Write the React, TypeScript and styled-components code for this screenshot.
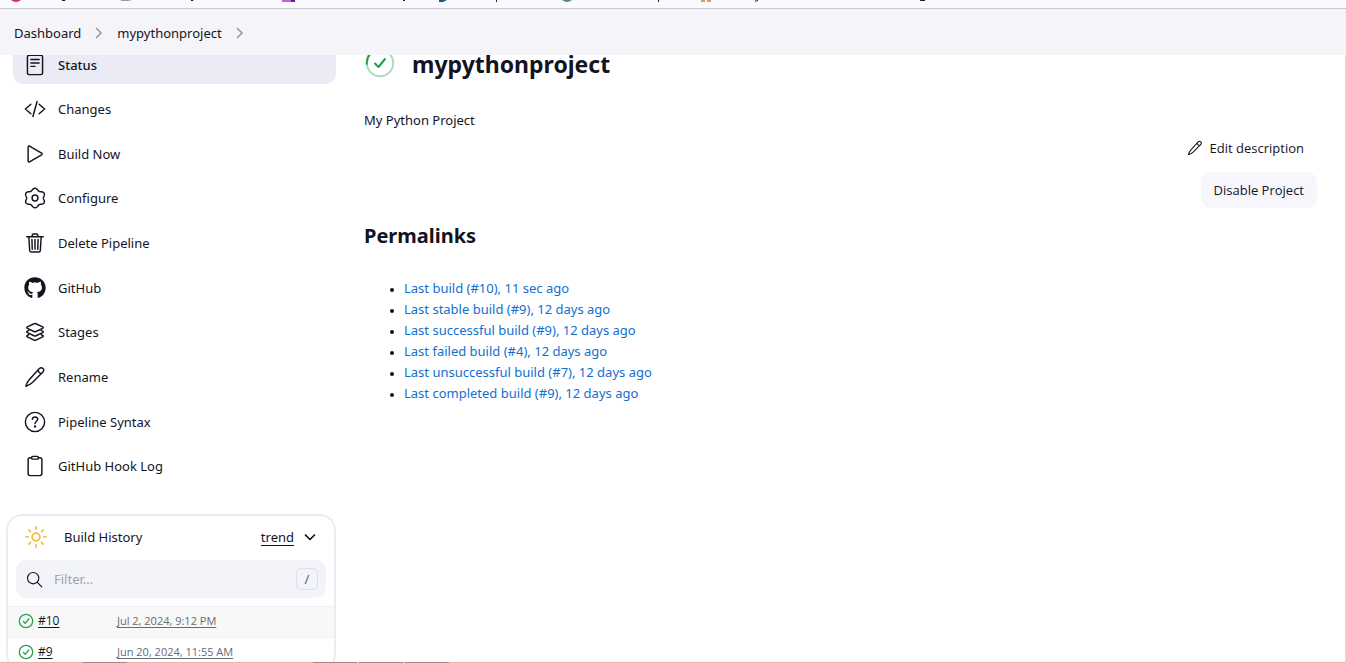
import React from "react";
import styled, { createGlobalStyle, css } from "styled-components";
import { FaGithub } from "react-icons/fa";

const GlobalStyle = createGlobalStyle`
  * { box-sizing: border-box; }
  body {
    margin: 0;
    background: #fff;
    color: #14141f;
    font-family: "Noto Sans", "Open Sans", sans-serif;
    font-size: 13px;
    line-height: 20px;
  }
  a { color: inherit; }
  button, input { font: inherit; color: inherit; }
`;

const Page = styled.div`
  display: flex;
  flex-direction: column;
  height: 100vh;
  overflow: hidden;
`;

const BookmarkStrip = styled.div`
  flex: none;
  height: 9px;
  background: #f9f9fe;
  border-bottom: 1px solid #c9c9d1;
  svg { display: block; }
`;

const Breadcrumbs = styled.nav`
  position: relative;
  z-index: 1;
  flex: none;
  display: flex;
  align-items: center;
  gap: 12px;
  height: 46px;
  padding: 2px 14px 0;
  background: #f4f4f9;
  a { text-decoration: none; }
  svg { color: #9a9aa5; }
`;

const Body = styled.div`
  flex: 1;
  min-height: 0;
  display: flex;
  align-items: flex-start;
  overflow: hidden;
  border-right: 1px solid #dcdce0;
`;

const SidePanel = styled.aside`
  flex: none;
  width: 336px;
  margin-top: -10px;
  padding-left: 6px;
`;

const Tasks = styled.nav`
  display: flex;
  flex-direction: column;
  justify-content: space-between;
  min-height: 441px;
  padding-left: 7px;
`;

const Task = styled.a<{ $active?: boolean }>`
  display: flex;
  align-items: center;
  gap: 12px;
  height: 39px;
  padding: 0 11px;
  border-radius: 10px;
  text-decoration: none;
  ${(p) => p.$active && css`
    background: #ebebf5;
    font-weight: 500;
  `}
`;

const HistoryCard = styled.section`
  margin-top: 28px;
  border: 2px solid #ebebf5;
  border-radius: 16px;
`;

const HistoryHead = styled.header`
  display: flex;
  align-items: center;
  height: 42px;
  padding: 0 16px;
`;

const HistoryTitle = styled.span`
  flex: 1;
  margin-left: 16px;
`;

const TrendLink = styled.a`
  display: flex;
  align-items: center;
  gap: 8px;
  text-underline-offset: 3px;
`;

const FilterBox = styled.label`
  display: flex;
  align-items: center;
  gap: 11px;
  height: 38px;
  margin: 2px 8px 8px;
  padding: 0 8px 0 10px;
  border-radius: 10px;
  background: #f3f3fa;
  input {
    flex: 1;
    min-width: 0;
    padding: 0;
    border: 0;
    outline: 0;
    background: none;
  }
  input::placeholder { color: #a3a3ae; opacity: 1; }
`;

const Key = styled.kbd`
  width: 22px;
  height: 22px;
  border: 1px solid #dfdfe9;
  border-radius: 5px;
  color: #5c5c68;
  font: inherit;
  text-align: center;
`;

const Builds = styled.table`
  width: 100%;
  border-collapse: collapse;
  font-size: 12px;
  font-family: "Open Sans", "Noto Sans", sans-serif;
  line-height: 18px;
  td {
    height: 31px;
    padding: 0 0 2px;
    border-top: 1px solid #f0f0f3;
  }
  tr:first-child { background: #f8f8f8; }
  a { text-underline-offset: 2px; }
`;

const BuildName = styled.td`
  width: 109px;
  div {
    display: flex;
    align-items: center;
    gap: 4px;
    padding-left: 10px;
  }
`;

const BuildDate = styled.td`
  color: #6a6a72;
  font-size: 11px;
`;

const MainPanel = styled.main`
  flex: 1;
  min-width: 0;
  margin-top: -9px;
  padding: 0 28px;
`;

const Title = styled.h1`
  display: flex;
  align-items: center;
  gap: 16px;
  margin: 0;
  font-size: 23px;
  line-height: 36px;
`;

const Description = styled.p`
  margin: 28px 0 0;
`;

const Actions = styled.div`
  display: flex;
  flex-direction: column;
  align-items: flex-end;
  gap: 6px;
`;

const Button = styled.button<{ $filled?: boolean }>`
  display: flex;
  align-items: center;
  gap: 7px;
  height: 36px;
  padding: 0 13px;
  border: 0;
  border-radius: 10px;
  background: ${(p) => (p.$filled ? "#f6f6fc" : "transparent")};
  font-family: "Open Sans", "Noto Sans", sans-serif;
`;

const Heading = styled.h2`
  margin: 12px 0 26px;
  font-size: 20px;
  line-height: 32px;
`;

const Permalinks = styled.ul`
  margin: 0;
  padding-left: 40px;
  line-height: 21px;
  li::marker { font-size: 10px; }
  a { color: #126fd0; text-decoration: none; }
`;

const StatusLine = styled.div`
  flex: none;
  height: 1px;
  background: #eeb0b0;
  svg { display: block; }
`;

const Glyph = ({ size = 22, children }: { size?: number; children: React.ReactNode }) => (
  <svg width={size} height={size} viewBox="0 0 512 512" fill="none" stroke="currentColor"
    strokeWidth="34" strokeLinecap="round" strokeLinejoin="round" aria-hidden="true">
    {children}
  </svg>
);

// Six-lobed outline of the settings cog
const cogOutline = Array.from({ length: 120 }, (_, i) => {
  const angle = (i / 120) * Math.PI * 2;
  const radius = 203 - 23 * Math.cos(6 * angle);
  const x = 256 + radius * 1.08 * Math.cos(angle);
  const y = 256 + radius * Math.sin(angle);
  return `${Math.round(x)},${Math.round(y)}`;
}).join(" ");

const icons = {
  status: (
    <Glyph>
      <rect x="80" y="32" width="352" height="448" rx="36" />
      <path d="M160 128h192M160 208h192M160 288h96" />
    </Glyph>
  ),
  changes: <Glyph><path d="M160 368L32 256l128-112M352 368l128-112-128-112M304 80l-96 352" /></Glyph>,
  build: (
    <Glyph>
      <path d="M96 91v330c0 18 17 29 32 21l282-168c14-9 14-27 0-36L128 70c-15-8-32 3-32 21z" />
    </Glyph>
  ),
  configure: (
    <Glyph>
      <circle cx="256" cy="256" r="68" />
      <polygon points={cogOutline} />
    </Glyph>
  ),
  trash: (
    <Glyph>
      <path d="M112 112l20 320c1 18 14 32 32 32h184c18 0 31-14 32-32l20-320M64 112h384M192 112V72c0-13 11-24 24-24h80c13 0 24 11 24 24v40M256 176v224M184 176l8 224M328 176l-8 224" />
    </Glyph>
  ),
  github: <FaGithub size={22} aria-hidden="true" />,
  stages: (
    <Glyph>
      <path d="M434 137L279 64c-14-7-32-7-46 0L78 137c-18 9-18 25 0 34l155 73c14 7 32 7 46 0l155-73c18-9 18-25 0-34z" />
      <path d="M112 219l-34 18c-18 9-18 25 0 34l155 73c14 7 32 7 46 0l155-73c18-9 18-25 0-34l-34-18" />
      <path d="M112 319l-34 18c-18 9-18 25 0 34l155 73c14 7 32 7 46 0l155-73c18-9 18-25 0-34l-34-18" />
    </Glyph>
  ),
  question: (
    <Glyph>
      <circle cx="256" cy="256" r="224" />
      <path d="M194 192c2-36 30-54 62-54 34 0 63 21 63 55 0 44-62 50-62 98" />
      <circle cx="257" cy="360" r="11" fill="currentColor" />
    </Glyph>
  ),
  clipboard: (
    <Glyph>
      <path d="M336 64h32c26 0 48 22 48 48v320c0 26-22 48-48 48H144c-26 0-48-22-48-48V112c0-26 22-48 48-48h32" />
      <rect x="176" y="32" width="160" height="64" rx="26" />
    </Glyph>
  ),
};

const Pencil = ({ size }: { size?: number }) => (
  <Glyph size={size}>
    <path d="M352 66c28-26 66-31 89-8 24 24 20 62-7 90L196 386c-44 42-94 66-152 84 14-60 40-110 82-154zM330 90c0 52 36 90 84 82" />
  </Glyph>
);

const Chevron = () => (
  <svg width="12" height="14" viewBox="0 0 12 14" fill="none" stroke="currentColor" strokeWidth="1.6" aria-hidden="true">
    <path d="M3 2l5 5-5 5" />
  </svg>
);

const Passed = () => (
  <svg width="16" height="16" viewBox="0 0 16 16" fill="none" stroke="#2ba04f" strokeWidth="1.3"
    strokeLinecap="round" strokeLinejoin="round" role="img" aria-label="Success">
    <circle cx="8" cy="8" r="6.7" />
    <path d="M5.3 8.4l1.9 1.9 3.600-4.300" />
  </svg>
);

const RunningPassed = () => (
  <svg width="32" height="32" viewBox="0 0 32 32" fill="none" strokeLinecap="round" strokeLinejoin="round"
    role="img" aria-label="In progress">
    <circle cx="16" cy="15" r="13.2" stroke="#a9dcb9" strokeWidth="2" />
    <path d="M2.800 16A13.2 13.2 0 0 1 10 3.200" stroke="#1fa34a" strokeWidth="2" />
    <path d="M11 15.500l3.500 3.500 6.500-8" stroke="#1fa34a" strokeWidth="2" />
  </svg>
);

const Sun = () => (
  <Glyph size={24}>
    <g stroke="#f5b731">
      <circle cx="256" cy="256" r="82" />
      <path d="M256 40v52M256 420v52M40 256h52M420 256h52M103 103l37 37M372 372l37 37M409 103l-37 37M140 372l-37 37" />
    </g>
  </Glyph>
);

const tasks = [
  { label: "Status", icon: icons.status, active: true },
  { label: "Changes", icon: icons.changes },
  { label: "Build Now", icon: icons.build },
  { label: "Configure", icon: icons.configure },
  { label: "Delete Pipeline", icon: icons.trash },
  { label: "GitHub", icon: icons.github },
  { label: "Stages", icon: icons.stages },
  { label: "Rename", icon: <Pencil /> },
  { label: "Pipeline Syntax", icon: icons.question },
  { label: "GitHub Hook Log", icon: icons.clipboard },
];

const builds = [
  { name: "#10", date: "Jul 2, 2024, 9:12 PM" },
  { name: "#9", date: "Jun 20, 2024, 11:55 AM" },
];

const permalinks = [
  "Last build (#10), 11 sec ago",
  "Last stable build (#9), 12 days ago",
  "Last successful build (#9), 12 days ago",
  "Last failed build (#4), 12 days ago",
  "Last unsuccessful build (#7), 12 days ago",
  "Last completed build (#9), 12 days ago",
];

export default function App() {
  return (
    <Page>
      <GlobalStyle />
      <BookmarkStrip>
        <svg width="940" height="8" aria-hidden="true">
          <path d="M11 0h10q-5 4-10 0z" fill="#d32f5b" />
          <path d="M120 0h12l-4 1h-6z" fill="#999" />
          <path d="M282 0h9v2h-9z" fill="#c060e0" />
          <path d="M291 0h4v2h-4z" fill="#6a1f9a" />
          <path d="M439 0h8l-4 2h-4z" fill="#24557e" />
          <path d="M562 0h10q-5 4-10 0z" fill="#5d8a6b" />
          <path d="M701 0h4v2h-4zM707 0h4v2h-4z" fill="#e29a55" />
          <path d="M62 0.500h3l1-1M191 0.500h2l1-1M403 0.500h2M496.500 0v2M658.500 0v2M755 1h2l1-1M920 0.500h5" fill="none" stroke="#222" />
        </svg>
      </BookmarkStrip>
      <Breadcrumbs aria-label="Breadcrumb">
        <a href="#dashboard">Dashboard</a>
        <Chevron />
        <a href="#project">mypythonproject</a>
        <Chevron />
      </Breadcrumbs>
      <Body>
        <SidePanel>
          <Tasks aria-label="Project tasks">
            {tasks.map((t) => (
              <Task key={t.label} href="#task" $active={t.active}>
                {t.icon}
                <span>{t.label}</span>
              </Task>
            ))}
          </Tasks>
          <HistoryCard>
            <HistoryHead>
              <Sun />
              <HistoryTitle>Build History</HistoryTitle>
              <TrendLink href="#trend">
                trend
                <svg width="16" height="16" viewBox="0 0 16 16" fill="none" stroke="currentColor" strokeWidth="1.7"
                  strokeLinecap="round" strokeLinejoin="round" aria-hidden="true">
                  <path d="M3.500 6l4.500 4.500L12.500 6" />
                </svg>
              </TrendLink>
            </HistoryHead>
            <FilterBox>
              <Glyph size={17}>
                <circle cx="216" cy="216" r="170" />
                <path d="M340 340l136 136" />
              </Glyph>
              <input type="text" placeholder="Filter..." aria-label="Filter builds" />
              <Key>/</Key>
            </FilterBox>
            <Builds>
              <tbody>
                {builds.map((b) => (
                  <tr key={b.name}>
                    <BuildName>
                      <div>
                        <Passed />
                        <a href="#build">{b.name}</a>
                      </div>
                    </BuildName>
                    <BuildDate><a href="#build">{b.date}</a></BuildDate>
                  </tr>
                ))}
              </tbody>
            </Builds>
          </HistoryCard>
        </SidePanel>
        <MainPanel>
          <Title>
            <RunningPassed />
            mypythonproject
          </Title>
          <Description>My Python Project</Description>
          <Actions>
            <Button type="button">
              <Pencil size={16} />
              Edit description
            </Button>
            <Button type="button" $filled>Disable Project</Button>
          </Actions>
          <Heading>Permalinks</Heading>
          <Permalinks>
            {permalinks.map((p) => (
              <li key={p}><a href="#build">{p}</a></li>
            ))}
          </Permalinks>
        </MainPanel>
      </Body>
      <StatusLine>
        <svg width="450" height="1" aria-hidden="true">
          <path d="M83 0h44v1H83zM313 0h44v1h-44zM359 0h44v1h-44zM405 0h44v1h-44z" fill="#b08080" />
        </svg>
      </StatusLine>
    </Page>
  );
}
